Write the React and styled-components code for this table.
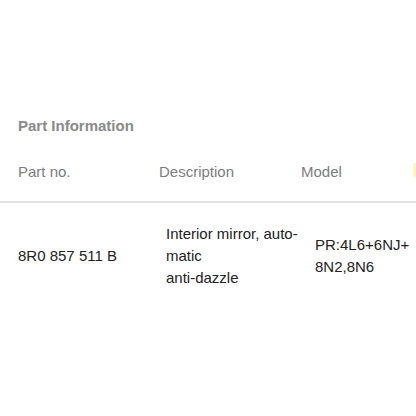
import styled, { createGlobalStyle } from "styled-components";

const Global = createGlobalStyle`
  html, body {
    margin: 0;
    padding: 0;
    background: #fff;
    font-family: "Liberation Sans", Arial, sans-serif;
  }
`;

const Page = styled.div`
  width: 416px;
  height: 416px;
  overflow: hidden;
  padding-top: 116px;
  box-sizing: border-box;
`;

const Title = styled.h2`
  margin: 0 0 0 18px;
  font-size: 15px;
  line-height: 20px;
  font-weight: 700;
  color: #8a8a8a;
`;

const Table = styled.div`
  margin-top: 26px;
  width: 560px;
`;

const Row = styled.div`
  display: grid;
  grid-template-columns: 141px 142px 112px 160px;
  padding-left: 18px;
  align-items: center;
`;

const HeadRow = styled(Row)`
  height: 39px;
  align-items: start;
  border-bottom: 2px solid #e2e2e2;
`;

const HeadCell = styled.div`
  font-size: 15px;
  line-height: 20px;
  color: #7d7d7d;
`;

const BodyRow = styled(Row)`
  height: 106px;
`;

const Cell = styled.div`
  font-size: 15px;
  line-height: 22px;
  color: #222;
  white-space: nowrap;
  padding-left: ${({ $indent }) => $indent || 0}px;
`;

const Sliver = styled.span`
  display: inline-block;
  width: 3px;
  height: 14px;
  background: #fff3c4;
`;

export default function App() {
  return (
    <>
      <Global />
      <Page>
        <Title>Part Information</Title>
        <Table>
          <HeadRow>
            <HeadCell>Part no.</HeadCell>
            <HeadCell>Description</HeadCell>
            <HeadCell>Model</HeadCell>
            <HeadCell><Sliver /></HeadCell>
          </HeadRow>
          <BodyRow>
            <Cell>8R0 857 511 B</Cell>
            <Cell $indent={7}>
              Interior mirror, auto-
              <br />
              matic
              <br />
              anti-dazzle
            </Cell>
            <Cell $indent={14}>
              PR:4L6+6NJ+
              <br />
              8N2,8N6
            </Cell>
            <Cell />
          </BodyRow>
        </Table>
      </Page>
    </>
  );
}
